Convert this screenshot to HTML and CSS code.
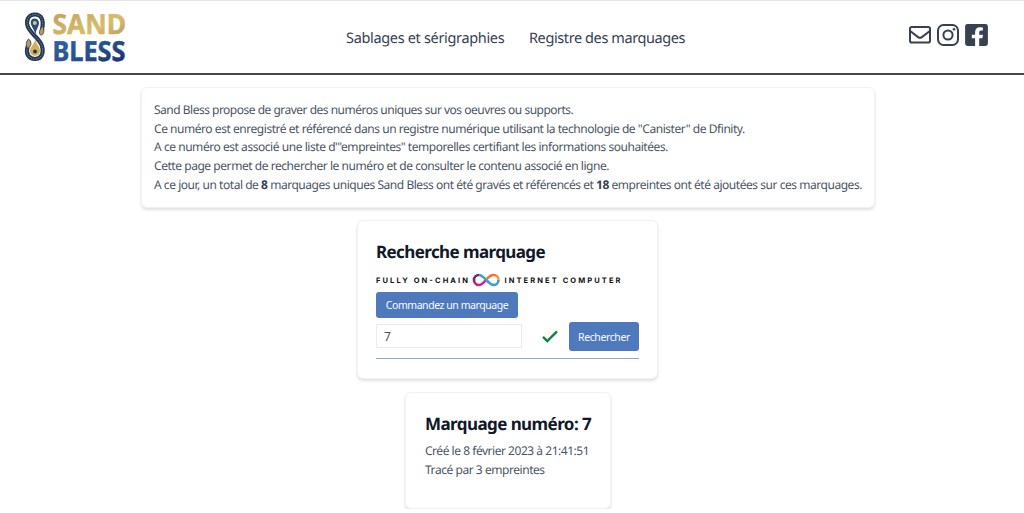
FILE: index.html
```html
<!DOCTYPE html>
<html lang="fr">
<head>
<meta charset="utf-8">
<title>Sand Bless</title>
<link rel="stylesheet" href="styles.css">
</head>
<body>
<header class="topbar">
  <svg class="logo" width="104" height="60" viewBox="0 0 104 60" role="img" aria-label="Sand Bless">
    <defs>
      <linearGradient id="gold" x1="0" y1="0" x2="1" y2="1"><stop offset="0" stop-color="#c09a62"/><stop offset=".6" stop-color="#d8bd68"/><stop offset="1" stop-color="#b1935f"/></linearGradient>
      <linearGradient id="navy" x1="0" y1="0" x2="1" y2="1"><stop offset="0" stop-color="#3268a8"/><stop offset=".5" stop-color="#24518f"/><stop offset="1" stop-color="#1b2463"/></linearGradient>
    </defs>
    <g fill="none" stroke-linecap="round">
      <path d="M18 20C20 12 18 5.500 11 5.500C4 5.500 1.500 12 4 18C7 25 16 30 18 37C20 45 17 50 11 50C5 50 1.500 45 3.500 38" stroke="#273754" stroke-width="4.200"/>
      <path d="M18 20C20 12 18 5.500 11 5.500C4 5.500 1.500 12 4 18C7 25 16 30 18 37C20 45 17 50 11 50C5 50 1.500 45 3.500 38" stroke="#8992a0" stroke-width=".9" stroke-dasharray=".6 2"/>
    </g>
    <path d="M10.500 9.500c-3.500 0-4.500 3.500-3 7 1 2.500 3 5 4 9 .5-5 3.500-8 3.500-11.500 0-2.500-1.800-4.500-4.500-4.500z" fill="#284c83"/>
    <path d="M11 29.500c.8 5-5 7.500-5 12.500 0 3 2 4.800 5 4.800s5-1.800 5-4.800c0-4.500-4-7.500-5-12.500z" fill="#d3b05c"/>
    <path d="M18.300 17c2.500 3 1.800 8.500-.8 9s-3.200-4 .8-9z" fill="#b69b58" stroke="#273754" stroke-width=".8"/>
    <path d="M4.500 30c3 2 3.800 6.500-.8 9.500-2.300-3-1.700-7 .8-9.500z" fill="#b69b58" stroke="#273754" stroke-width=".8"/>
    <circle cx="10.800" cy="14" r="2" fill="#dfc76d"/>
    <circle cx="11" cy="42.500" r="2" fill="#27395c"/>
    <text class="logo-text" x="28.500" y="25.200" fill="url(#gold)" stroke="url(#gold)" textLength="73.500" lengthAdjust="spacingAndGlyphs">SAND</text>
    <text class="logo-text" x="28.500" y="52.300" fill="url(#navy)" stroke="url(#navy)" textLength="73" lengthAdjust="spacingAndGlyphs">BLESS</text>
  </svg>
  <nav class="nav"><a class="nav-first">Sablages et sérigraphies</a><a class="nav-second">Registre des marquages</a></nav>
  <div class="social">
    <svg width="22" height="24" viewBox="0 0 22 24" fill="none" stroke="#374151" stroke-width="2"><rect x="1" y="4" width="20" height="15.500" rx="1.800"/><path d="M1.500 8.200l7.600 5.900q1.900 1.400 3.800 0l7.600-5.900"/></svg>
    <svg width="22" height="24" viewBox="0 0 22 24" fill="none" stroke="#374151" stroke-width="2"><rect x="1" y="2" width="20" height="20" rx="5.500"/><circle cx="11" cy="12" r="4.600"/><circle cx="17" cy="6.300" r="1.300" fill="#374151" stroke="none"/></svg>
    <svg width="23" height="24" viewBox="0 0 23 24"><path fill="#374151" d="M2.500 1h18a2.400 2.400 0 0 1 2.400 2.400v17.200a2.400 2.400 0 0 1-2.400 2.400h-6.300v-7.700h3.200l.6-3.600h-3.800V9.500c0-1 .5-2 2.100-2h1.600v-3s-1.500-.3-2.900-.3c-3 0-4.900 1.800-4.900 5v2.500H6.800v3.600h3.300V23H2.500A2.400 2.400 0 0 1 .1 20.600V3.400A2.400 2.400 0 0 1 2.500 1z"/></svg>
  </div>
</header>
<main class="content">
  <section class="card intro">
    <p class="l1">Sand Bless propose de graver des numéros uniques sur vos oeuvres ou supports.</p>
    <p class="l2">Ce numéro est enregistré et référencé dans un registre numérique utilisant la technologie de "Canister" de Dfinity.</p>
    <p class="l3">A ce numéro est associé une liste d'"empreintes" temporelles certifiant les informations souhaitées.</p>
    <p class="l4">Cette page permet de rechercher le numéro et de consulter le contenu associé en ligne.</p>
    <p class="l5">A ce jour, un total de <b>8</b> marquages uniques Sand Bless ont été gravés et référencés et <b>18</b> empreintes ont été ajoutées sur ces marquages.</p>
  </section>
  <section class="card search">
    <h2 class="title search-title">Recherche marquage</h2>
    <svg class="chain" width="246" height="14" viewBox="0 0 246 14">
      <defs>
        <linearGradient id="left" x1="0" y1="0" x2="1" y2="1"><stop offset="0" stop-color="#522785"/><stop offset=".45" stop-color="#b52382"/><stop offset="1" stop-color="#ed1e79"/></linearGradient>
        <linearGradient id="right" x1="0" y1="0" x2="1" y2="1"><stop offset="0" stop-color="#f15a24"/><stop offset="1" stop-color="#fbb03b"/></linearGradient>
      </defs>
      <text class="chain-text" x="0" y="10" textLength="92">FULLY ON-CHAIN</text>
      <g fill="none" stroke-width="2.700">
        <path d="M110 7C107.500 10 105.500 12 103 12A5 5 0 0 1 103 2" stroke="url(#left)"/>
        <path d="M110 7C112.500 4 115 2 117.500 2A5 5 0 0 1 122.500 7" stroke="url(#right)"/>
        <path d="M103 2C108 2 112.500 12 117.500 12A5 5 0 0 0 122.500 7" stroke="#3f9fd6"/>
      </g>
      <text class="chain-text" x="128.500" y="9.500" textLength="116">INTERNET COMPUTER</text>
    </svg>
    <button class="button order">Commandez un marquage</button>
    <div class="search-row">
      <input class="field" value="7" aria-label="Numéro">
      <svg class="check" width="16" height="13" viewBox="0 0 16 13"><path d="M1 6.800l4.300 4.300L15 1.400" fill="none" stroke="#15803d" stroke-width="2.400"/></svg>
      <button class="button find">Rechercher</button>
    </div>
  </section>
  <section class="card result">
    <h2 class="title result-title">Marquage numéro: 7</h2>
    <p class="created">Créé le 8 février 2023 à 21:41:51</p>
    <p class="traced">Tracé par 3 empreintes</p>
  </section>
</main>
</body>
</html>
```
FILE: styles.css
```css
* { box-sizing: border-box; }
html { overflow: hidden; }
body { margin: 0; background: #fff; color: #4b5563; font: 12px/18.7px "Noto Sans", sans-serif; text-rendering: geometricPrecision; }
p, h2 { margin: 0; white-space: nowrap; }
p { width: max-content; }
.topbar { height: 75px; border-top: 1px solid #e5e5e5; border-bottom: 2px solid #46464a; display: grid; grid-template-columns: 346px 1fr 115px; align-items: start; }
.logo { margin: 8px 0 0 24px; overflow: visible; }
.logo-text { font: 700 27.5px "Noto Sans", sans-serif; stroke-width: .5px; }
.nav { display: flex; gap: 25px; padding-top: 25px; font-size: 14.5px; line-height: 24px; color: #374151; white-space: nowrap; }
.nav-first { width: 158px; letter-spacing: -.33px; }
.nav-second { letter-spacing: -.4px; }
.social { display: flex; gap: 6px; padding-top: 22px; }
.content { display: flex; flex-direction: column; align-items: center; padding: 12px 8px 0 0; }
.card { background: #fff; border: 1px solid #f1f1f2; border-radius: 6px; box-shadow: 0 2px 3px rgba(0,0,0,.12); }
.intro { width: 734px; height: 121px; padding: 13px 12px; }
.intro b { color: #374151; }
.l1 { letter-spacing: -.5px; }
.l2 { letter-spacing: -.455px; }
.l3 { letter-spacing: -.45px; }
.l4 { letter-spacing: -.447px; }
.l5 { letter-spacing: -.46px; }
.search { width: 301px; height: 159px; margin: 12px 1px 0 0; padding: 18px; display: flex; flex-direction: column; align-items: flex-start; }
.title { color: #111827; font-size: 17px; line-height: 26px; font-weight: 700; }
.search-title { letter-spacing: -.6px; }
.result-title { letter-spacing: -.57px; }
.chain { margin-top: 8px; }
.chain-text { font: 700 7.5px Inter, sans-serif; fill: #111; }
.button { border: 0; border-radius: 3px; background: #4f79bd; color: #f8fafc; font: 10.5px/18px "Noto Sans", sans-serif; padding: 0; white-space: nowrap; }
.order { width: 142px; height: 26px; margin-top: 5px; letter-spacing: -.45px; }
.search-row { width: 263px; height: 37px; margin-top: 4px; border-bottom: 1px solid #92a5ca; display: flex; align-items: flex-start; }
.field { width: 146px; height: 24px; margin-top: 2px; border: 1px solid #ececef; padding: 0 7px; color: #4b5563; font: 12px "Noto Sans", sans-serif; }
.check { margin: 8px 11px 0 20px; }
.find { width: 70px; height: 29px; letter-spacing: -.4px; }
.result { width: 206px; height: 117px; margin-top: 13px; padding: 18px 19px; }
.created { margin-top: 5px; letter-spacing: -.47px; }
.traced { letter-spacing: -.45px; }
```
